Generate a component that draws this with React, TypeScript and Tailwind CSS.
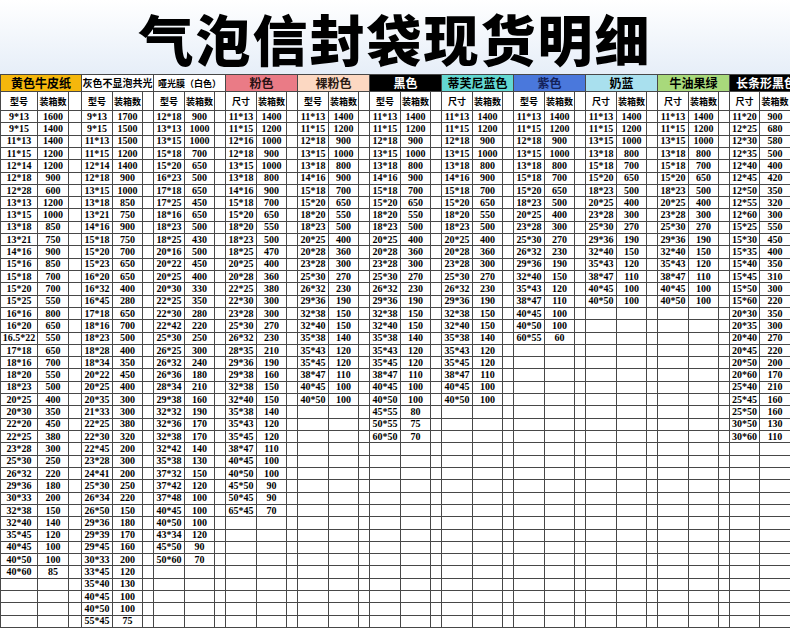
import React from 'react';

type Group = {
  name: string;
  head: string;
  nameSize?: string;
  label: string;
  span: string;
  rows: string;
};

const groups: Group[] = [
  {
    name: '黄色牛皮纸',
    head: 'bg-[#f5b70c] text-black',
    label: '型号',
    span: 'col-span-3',
    rows: '9*13:1600,9*15:1400,11*13:1400,11*15:1200,12*14:1200,12*18:900,12*28:600,13*13:1200,13*15:1000,13*18:850,13*21:750,14*16:900,15*16:850,15*18:700,15*20:700,15*25:550,16*16:800,16*20:650,16.5*22:550,17*18:650,18*16:700,18*20:550,18*23:500,20*25:400,20*30:350,22*20:450,22*25:380,23*28:300,25*30:250,26*32:220,29*36:180,30*33:200,32*38:150,32*40:140,35*45:120,40*45:100,40*50:100,40*60:85',
  },
  {
    name: '灰色不显泡共光',
    head: 'bg-white text-black',
    nameSize: 'text-[10px]',
    label: '型号',
    span: 'col-span-3',
    rows: '9*13:1700,9*15:1500,11*13:1500,11*15:1200,12*14:1400,12*18:900,13*15:1000,13*18:850,13*21:750,14*16:900,15*18:750,15*20:700,15*23:650,16*20:650,16*32:400,16*45:280,17*18:650,18*16:700,18*23:500,18*28:400,18*34:350,20*22:450,20*25:400,20*35:300,21*33:300,22*25:380,22*30:320,22*45:200,23*28:300,24*41:200,25*30:250,26*34:220,26*50:150,29*36:180,29*39:170,29*45:160,30*33:200,33*45:120,35*40:130,40*45:100,40*50:100,55*45:75',
  },
  {
    name: '哑光膜（白色）',
    head: 'bg-white text-black',
    nameSize: 'text-[9px]',
    label: '型号',
    span: 'col-span-3',
    rows: '12*18:900,13*13:1000,13*15:1000,15*18:700,15*20:650,16*23:500,17*18:650,17*25:450,18*16:650,18*23:500,18*25:430,20*16:500,20*22:450,20*25:400,20*30:330,22*25:350,22*30:280,22*42:220,25*30:250,26*25:300,26*32:240,26*36:180,28*34:210,29*38:160,32*32:190,32*36:170,32*38:170,32*42:140,35*38:130,37*32:150,37*42:120,37*48:100,40*45:100,40*50:100,43*34:120,45*50:90,50*60:70',
  },
  {
    name: '粉色',
    head: 'bg-[#ea7b86] text-[#2a1214]',
    label: '尺寸',
    span: 'col-span-3',
    rows: '11*13:1400,11*15:1200,12*16:1000,12*18:900,13*15:1000,13*18:800,14*16:900,15*18:700,15*20:650,18*20:550,18*23:500,18*25:470,20*25:400,20*28:360,22*25:380,22*30:300,23*28:300,25*30:270,26*32:230,28*35:210,29*36:190,29*38:160,32*38:150,32*40:150,35*38:140,35*43:120,35*45:120,38*47:110,40*45:100,40*50:100,45*50:90,50*45:90,65*45:70',
  },
  {
    name: '裸粉色',
    head: 'bg-[#fcd8c2] text-[#2a1a14]',
    label: '型号',
    span: 'col-span-3',
    rows: '11*13:1400,11*15:1200,12*18:900,13*15:1000,13*18:800,14*16:900,15*18:700,15*20:650,18*20:550,18*23:500,20*25:400,20*28:360,23*28:300,25*30:270,26*32:230,29*36:190,32*38:150,32*40:150,35*38:140,35*43:120,35*45:120,38*47:110,40*45:100,40*50:100',
  },
  {
    name: '黑色',
    head: 'bg-black text-white',
    label: '型号',
    span: 'col-span-3',
    rows: '11*13:1400,11*15:1200,12*18:900,13*15:1000,13*18:800,14*16:900,15*18:700,15*20:650,18*20:550,18*23:500,20*25:400,20*28:360,23*28:300,25*30:270,26*32:230,29*36:190,32*38:150,32*40:150,35*38:140,35*43:120,35*45:120,38*47:110,40*45:100,40*50:100,45*55:80,50*55:75,60*50:70',
  },
  {
    name: '蒂芙尼蓝色',
    head: 'bg-[#63d8d2] text-black',
    label: '尺寸',
    span: 'col-span-3',
    rows: '11*13:1400,11*15:1200,12*18:900,13*15:1000,13*18:800,14*16:900,15*18:700,15*20:650,18*20:550,18*23:500,20*25:400,20*28:360,23*28:300,25*30:270,26*32:230,29*36:190,32*38:150,32*40:150,35*38:140,35*43:120,35*45:120,38*47:110,40*45:100,40*50:100',
  },
  {
    name: '紫色',
    head: 'bg-[#4a78dc] text-[#14225a]',
    label: '型号',
    span: 'col-span-3',
    rows: '11*13:1400,11*15:1200,12*18:900,13*15:1000,13*18:800,15*18:700,15*20:650,18*23:500,20*25:400,23*28:300,25*30:270,26*32:230,29*36:190,32*40:150,35*43:120,38*47:110,40*45:100,40*50:100,60*55:60',
  },
  {
    name: '奶蓝',
    head: 'bg-[#a9e0ee] text-black',
    label: '尺寸',
    span: 'col-span-3',
    rows: '11*13:1400,11*15:1200,13*15:1000,13*18:800,15*18:700,15*20:650,18*23:500,20*25:400,23*28:300,25*30:270,29*36:190,32*40:150,35*43:120,38*47:110,40*45:100,40*50:100',
  },
  {
    name: '牛油果绿',
    head: 'bg-[#a8d97b] text-black',
    label: '尺寸',
    span: 'col-span-3',
    rows: '11*13:1400,11*15:1200,13*15:1000,13*18:800,15*18:700,15*20:650,18*23:500,20*25:400,23*28:300,25*30:270,29*36:190,32*40:150,35*43:120,38*47:110,40*45:100,40*50:100',
  },
  {
    name: '长条形黑色',
    head: 'bg-black text-white',
    label: '尺寸',
    span: 'col-span-2',
    rows: '11*20:900,12*25:680,12*30:580,12*35:500,12*40:400,12*45:420,12*50:350,12*55:320,12*60:300,15*25:550,15*30:450,15*35:400,15*40:350,15*45:310,15*50:300,15*60:220,20*30:350,20*35:300,20*40:270,20*45:220,20*50:200,20*60:170,25*40:210,25*45:160,25*50:160,30*50:130,30*60:110',
  },
];

const ROWS = 42;

const cell = 'border-r border-b border-[#484848] flex items-center justify-center overflow-hidden whitespace-nowrap';

export default function App() {
  const parsed = groups.map((g) => g.rows.split(',').map((r) => r.split(':')));

  return (
    <div className="w-[790px] h-[628px] bg-white overflow-hidden">
      <div className="h-[74px] flex items-center justify-center bg-linear-to-b from-white to-[#e6eef8]">
        <h1 className="font-['Noto_Sans_CJK_SC',sans-serif] font-black text-[55px] leading-[1.2] text-black tracking-[2px]">
          气泡信封袋现货明细
        </h1>
      </div>

      <div className="grid grid-cols-[37px_31px_13px_repeat(9,31px_30px_11px)_30px_31px] grid-rows-[17px_19px_repeat(42,minmax(0,1fr))] h-[554px] border-l border-t border-[#484848] font-['Liberation_Serif','Noto_Sans_CJK_SC',serif] font-bold text-black">
        {groups.map((g, i) => (
          <div
            key={'h' + i}
            className={`${g.span} ${g.head} ${cell} font-['Noto_Sans_CJK_SC',sans-serif] ${g.nameSize ?? 'text-[12px]'} leading-none ${i === 10 ? 'justify-start pl-[6px]' : ''}`}
          >
            {g.name}
          </div>
        ))}

        {groups.map((g, i) => (
          <React.Fragment key={'s' + i}>
            <div className={`${cell} font-['Noto_Sans_CJK_SC',sans-serif] text-[9px] leading-none`}>{g.label}</div>
            <div className={`${cell} font-['Noto_Sans_CJK_SC',sans-serif] text-[9px] leading-none`}>装箱数</div>
            {i < 10 && <div className={cell} />}
          </React.Fragment>
        ))}

        {Array.from({ length: ROWS }).map((_, r) =>
          groups.map((g, i) => {
            const row = parsed[i][r];
            return (
              <React.Fragment key={r + '-' + i}>
                <div className={`${cell} text-[10px] leading-none`}>{row ? row[0] : ''}</div>
                <div className={`${cell} text-[10px] leading-none`}>{row ? row[1] : ''}</div>
                {i < 10 && <div className={cell} />}
              </React.Fragment>
            );
          })
        )}
      </div>
    </div>
  );
}
